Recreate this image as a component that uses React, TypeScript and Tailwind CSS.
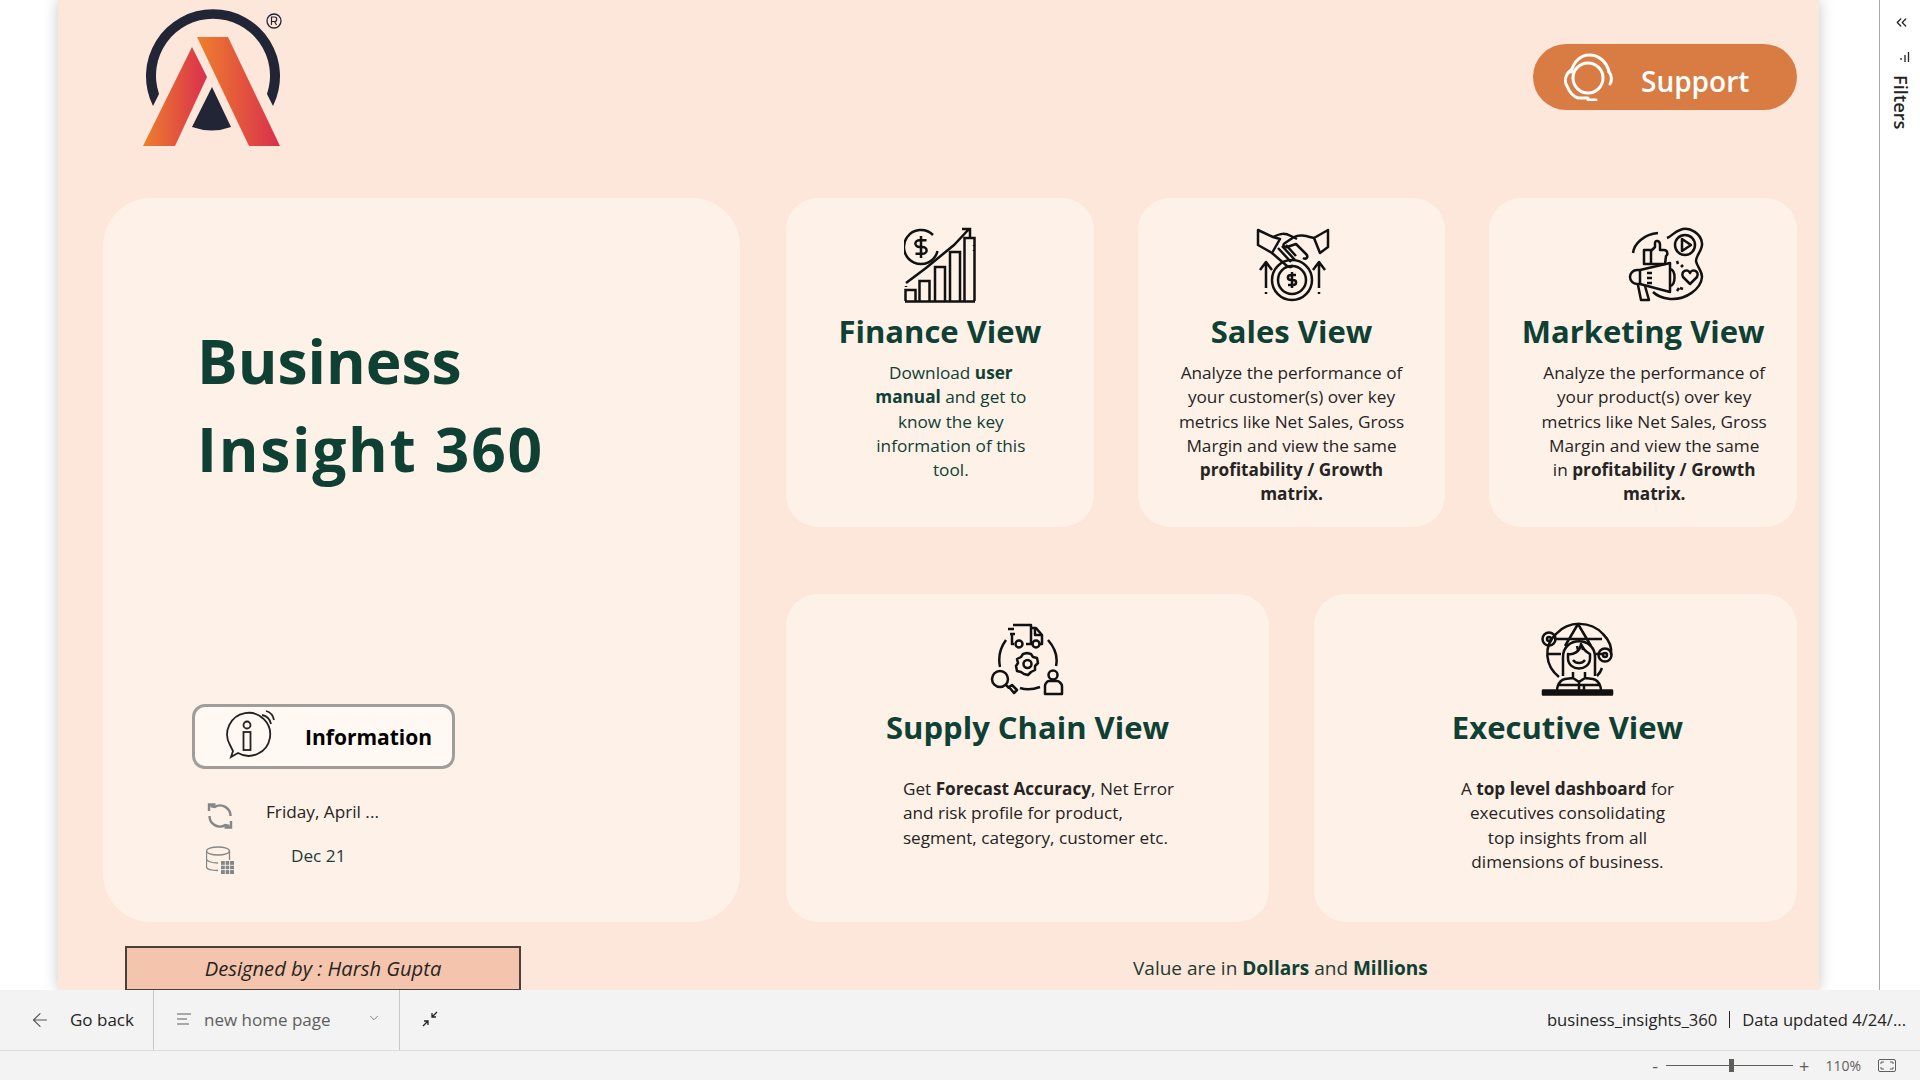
import { ReactNode } from "react";
import { ArrowLeft, ChevronDown, ChevronsLeft } from "lucide-react";

const dollar = (x: number, y: number, s: number) =>
  `M${x} ${y - s}v${2 * s}M${x + 0.5 * s} ${y - 0.62 * s}H${x - 0.13 * s}a${0.38 * s} ${0.31 * s} 0 0 0 0 ${0.62 * s}h${0.26 * s}a${0.38 * s} ${0.31 * s} 0 0 1 0 ${0.62 * s}H${x - 0.5 * s}`;

function FinanceIcon() {
  return (
    <svg width="72" height="76" viewBox="0 0 72 76" fill="none" stroke="#111" strokeWidth="2.500">
      <path d="M29 8A17 17 0 1 0 33.500 24" />
      <path d={dollar(17, 20, 11)} />
      <path d="M1 74.500h70M1.500 74V63h10v11M15.500 74V54h10v20M31 74V40h10v34M46 74V25h10v49M60.500 74V11h10v63" />
      <path d="M2 56 22 41 50 18 65 2M58 2h8v8" />
      <path d="M2 59v1M70 18v1M70 23v1" />
    </svg>
  );
}

function SalesIcon() {
  return (
    <svg width="100" height="90" viewBox="0 0 100 90" fill="none" stroke="#111" strokeWidth="2.500" strokeLinejoin="round">
      <path d="M16 10 31 17 38 19 30 33 16 25Z" />
      <path d="M86 10 72 18 78 33 86 27Z" />
      <path d="M31 17c8-4 12-4 18-1l6 3M72 18c-8-2-14-4-20-1l-9 6c-3 2-1 5 2 4l9-3 10 10c3 3 0 6-3 4" />
      <path d="M30 33 45 46c3 2 5 1 6-1M36 28l13 14M40 26l13 14M44 25l10 11" />
      <circle cx="50" cy="60" r="20" />
      <circle cx="50" cy="60" r="14" />
      <path d={dollar(50, 60, 8)} />
      <path d="M24 68V42M18 50l6-8 6 8M24 72v2M77 68V42M71 50l6-8 6 8M77 72v2" />
    </svg>
  );
}

function MarketingIcon() {
  return (
    <svg width="100" height="90" viewBox="0 0 100 90" fill="none" stroke="#111" strokeWidth="2.500" strokeLinejoin="round">
      <path d="M47 18C52 16 54 12 60 10C70 6 81 14 82 23C83 30 76 35 76 41C77 47 82 50 82 57C81 69 66 80 50 79C43 78 37 76 33 72" />
      <path d="M13 33C14 24 24 14 38 13" />
      <circle cx="65" cy="25" r="10" />
      <path d="M62 19v12l9-6Z" />
      <path d="M24 30h7v14h-7ZM31 31l4-4V23c0-3 5-3 5 2v5h4c4 0 4 5 2 6l-1 8H31" />
      <path d="M50 43 20 50H17a7 7 0 0 0 0 14h3l30 8Z" />
      <path d="M20 50v14M27 53h5M27 58h5M27 63h5" />
      <path d="M50 49c6 1 6 16 0 17M18 65l3 15h8l-4-14" />
      <path d="M57 41l1 3M63 45l-2 2M57 71l2-3M63 69l-3-1" />
      <path d="M70 64l-7-7c-3-6 5-9 7-4 2-5 10-2 7 4Z" />
    </svg>
  );
}

function SupplyIcon() {
  return (
    <svg width="100" height="90" viewBox="0 0 100 90" fill="none" stroke="#111" strokeWidth="2.500" strokeLinejoin="round">
      <path d="M33 11H51V30H46M34 30H32V20M51 14H56L62 21V30H60M51 30H52M28 15H34M30 20H35" />
      <circle cx="39" cy="30" r="3.500" />
      <circle cx="56" cy="30" r="3.500" />
      <path d="M55 15v6h7" />
      <path d="M26 26C20 34 18 43 20 53M68 26C75 34 78 43 76 52M40 74C46 76 52 76 60 73" />
      <path d="M47 39l4 1 2 3 4 1 1 5-3 3v4l-4 2-3 3-4-1-3-2-4-1-1-5 2-3-1-4 4-2 2-3Z" />
      <circle cx="47.500" cy="50" r="4" />
      <circle cx="20" cy="65" r="8" />
      <path d="M26 71l3 3M29 73l5 6 3-3-5-5Z" />
      <circle cx="73" cy="61" r="4.500" />
      <path d="M65 80V72c0-2 2-5 4-5h8c2 0 5 3 5 5v8Z" />
    </svg>
  );
}

function ExecutiveIcon() {
  return (
    <svg width="100" height="90" viewBox="0 0 100 90" fill="none" stroke="#111" strokeWidth="2.500" strokeLinejoin="round">
      <path d="M29 63C15 52 13 32 26 20C39 6 61 7 73 20C79 26 82 34 81 41M72 54C71 57 69 60 67 62" />
      <path d="M24 25H72M17 40H31M66 40H74M48 10L35 32M48 10L61 32" />
      <circle cx="19" cy="25" r="6.500" />
      <circle cx="19" cy="25" r="2" />
      <circle cx="75" cy="41" r="6.500" />
      <circle cx="75" cy="41" r="2" />
      <path d="M33 62V43C33 22 65 22 65 43V62" />
      <path d="M38 40c5 1 12-2 13-10 2 5 5 8 9 10v4c0 14-22 14-22 0Z" />
      <path d="M52 32l1 4M47 32l1 4M43 46c3 4 9 4 12 0" />
      <path d="M43 58v6l-8 1c-8 2-9 12-7 15M55 58v6l8 1c8 2 9 12 7 15M43 64l6 4 6-4M49 68v12M44 71h10v9M28 71H44M54 71H70" />
      <path d="M13 76.500H82V80.500H13Z" fill="#111" />
    </svg>
  );
}

function Logo() {
  return (
    <svg width="170" height="155" viewBox="130 0 170 155" fill="none">
      <defs>
        <linearGradient id="legL" x1="143" y1="0" x2="207" y2="0" gradientUnits="userSpaceOnUse">
          <stop offset="0" stopColor="#ee7f2c" />
          <stop offset="1" stopColor="#d92f4d" />
        </linearGradient>
        <linearGradient id="legR" x1="197" y1="0" x2="280" y2="0" gradientUnits="userSpaceOnUse">
          <stop offset="0" stopColor="#ee7f2c" />
          <stop offset="1" stopColor="#d92f4d" />
        </linearGradient>
      </defs>
      <path d="M153 106A67 67 0 1 1 273 106L267 94A57 57 0 1 0 159 94Z" fill="#222536" />
      <path d="M192 47 207 77 175 146H143Z" fill="url(#legL)" />
      <path d="M197 37H228L280 146H249Z" fill="url(#legR)" />
      <path d="M212 87 231 127Q212 134 192 127Z" fill="#222536" />
      <circle cx="274" cy="21" r="7" stroke="#222536" strokeWidth="1.300" />
      <path d="M271.500 25V17h3a2 2 0 0 1 0 4.500h-3M274.500 21.500l2 3.500" stroke="#222536" strokeWidth="1.200" />
    </svg>
  );
}

function HeadsetIcon() {
  return (
    <svg width="50" height="48" viewBox="0 0 50 48" fill="none" stroke="#fff" strokeWidth="3" strokeLinecap="round">
      <circle cx="24" cy="25" r="15" />
      <path d="M7 19C10 8 17 2 25 2C35 2 43 9 45 19" />
      <path d="M7 17C1 22 0 28 3 33C5 38 8 43 14 45H24M24 47h8" />
      <path d="M45 19c3 3 3 9 1 12" />
    </svg>
  );
}

function InfoIcon() {
  return (
    <svg width="54" height="54" viewBox="0 0 54 54" fill="none" stroke="#222" strokeWidth="1.800">
      <path d="M7 47l7-4A21.500 21.500 0 1 0 6 35L9 41Z" />
      <circle cx="23" cy="15" r="3.500" />
      <rect x="19.500" y="22" width="7" height="18" />
      <path d="M38 5c5 1 8 4 9 9M42 1c4 1 7 4 8 9" />
    </svg>
  );
}

function RefreshIcon() {
  return (
    <svg width="28" height="28" viewBox="0 0 28 28" fill="none" stroke="#858585" strokeWidth="2.400">
      <path d="M3 9V2.500H9.500" />
      <path d="M4.500 4 8.750 4.900A10.500 10.500 0 0 1 24.500 14" />
      <path d="M25 19v6.500H18.500" />
      <path d="M23.500 24 19.250 23.100A10.500 10.500 0 0 1 3.500 14" />
    </svg>
  );
}

function DatabaseIcon() {
  return (
    <svg width="28" height="28" viewBox="0 0 28 28" fill="none" stroke="#858585" strokeWidth="1.300">
      <ellipse cx="12" cy="5" rx="11.500" ry="4" />
      <path d="M.500 5v16c0 2 5 3.500 11.500 3.500M23.500 5v9M.500 13c0 2 5 4 11.500 4" />
      <rect x="15" y="15" width="13" height="13" fill="#858585" stroke="none" />
      <path d="M15 19.300h13M15 23.600h13M19.300 15v13M23.600 15v13" stroke="#fff" strokeWidth="0.800" />
    </svg>
  );
}

interface ViewCardProps {
  title: string;
  icon: ReactNode;
  iconClass?: string;
  titleClass?: string;
  bodyClass: string;
  children: ReactNode;
}

function ViewCard({ title, icon, iconClass = "h-[90px]", titleClass = "", bodyClass, children }: ViewCardProps) {
  return (
    <div className="flex-1 rounded-[32px] bg-[#fef1e8] flex flex-col items-center pt-[22px]">
      <div className={`flex items-center justify-center ${iconClass}`}>{icon}</div>
      <h2 className={`mt-[1px] text-[31px] leading-[40px] font-bold text-[#0e4033] ${titleClass}`}>{title}</h2>
      <p className={`text-[17.200px] leading-[24.300px] ${bodyClass}`}>{children}</p>
    </div>
  );
}

export default function App() {
  return (
    <div className="h-screen w-[1920px] overflow-hidden flex flex-col bg-white font-['Open_Sans',sans-serif] text-[#252423]">
      <div className="flex h-[990px]">
        {/* Report canvas */}
        <div className="ml-[58px] w-[1761px] h-[990px] bg-[#fde6da] shadow-[0_0_14px_rgba(0,0,0,0.22)] overflow-hidden">
          <header className="h-[198px] pl-[72px] pr-[22px] flex justify-between">
            <Logo />
            <button className="mt-[44px] w-[264px] h-[66px] rounded-full bg-[#d87c43] flex items-center pl-[31px] text-white">
              <HeadsetIcon />
              <span className="ml-[27px] mt-[8px] text-[28px] font-semibold">Support</span>
            </button>
          </header>

          <div className="flex h-[724px] pl-[45px] pr-[22px] gap-[46px]">
            <div className="w-[637px] rounded-[48px] bg-[#fef1e8] flex flex-col pt-[119px] pb-[48px] pl-[89px]">
              <h1 className="pl-[5px] text-[60.500px] leading-[88px] font-bold text-[#0e4033]">
                Business
                <br />
                <span className="tracking-[1.700px]">Insight 360</span>
              </h1>
              <div className="mt-auto">
                <div className="w-[263px] h-[65px] rounded-[13px] border-[3px] border-[#a09e9a] bg-[#fff8f3] flex items-center pl-[29px]">
                  <InfoIcon />
                  <span className="ml-[27px] mt-[2px] text-[21px] font-bold text-black">Information</span>
                </div>
                <div className="mt-[33px] flex items-center h-[28px] pl-[14px]">
                  <RefreshIcon />
                  <span className="ml-[32px] mb-[9px] text-[17.200px]">Friday, April ...</span>
                </div>
                <div className="mt-[16px] flex items-center h-[28px] pl-[14px]">
                  <DatabaseIcon />
                  <span className="ml-[57px] mb-[9px] text-[17.200px] text-[#1d3c3a]">Dec 21</span>
                </div>
              </div>
            </div>

            <div className="flex-1 flex flex-col gap-[67px]">
              <div className="flex h-[329px] gap-[44px]">
                <ViewCard
                  title="Finance View"
                  icon={<FinanceIcon />}
                  bodyClass="mt-[10px] pl-[22px] text-center text-[#0e4033]"
                >
                  Download <b>user</b>
                  <br />
                  <b>manual</b> and get to
                  <br />
                  know the key
                  <br />
                  information of this
                  <br />
                  tool.
                </ViewCard>
                <ViewCard title="Sales View" icon={<SalesIcon />} bodyClass="mt-[10px] text-center">
                  Analyze the performance of
                  <br />
                  your customer(s) over key
                  <br />
                  metrics like Net Sales, Gross
                  <br />
                  Margin and view the same
                  <br />
                  <b>profitability / Growth</b>
                  <br />
                  <b>matrix.</b>
                </ViewCard>
                <ViewCard
                  title="Marketing View"
                  icon={<MarketingIcon />}
                  iconClass="h-[90px] ml-[54px]"
                  bodyClass="mt-[10px] pl-[22px] text-center"
                >
                  Analyze the performance of
                  <br />
                  your product(s) over key
                  <br />
                  metrics like Net Sales, Gross
                  <br />
                  Margin and view the same
                  <br />
                  in <b>profitability / Growth</b>
                  <br />
                  <b>matrix.</b>
                </ViewCard>
              </div>

              <div className="flex h-[328px] gap-[45px]">
                <ViewCard
                  title="Supply Chain View"
                  icon={<SupplyIcon />}
                  iconClass="h-[90px] ml-[5px] -mt-[2px] mb-[2px]"
                  bodyClass="mt-[30px] pl-[22px] text-left"
                >
                  Get <b>Forecast Accuracy</b>, Net Error
                  <br />
                  and risk profile for product,
                  <br />
                  segment, category, customer etc.
                </ViewCard>
                <ViewCard
                  title="Executive View"
                  icon={<ExecutiveIcon />}
                  iconClass="h-[90px] ml-[48px] -mt-[2px] mb-[2px]"
                  titleClass="ml-[24px]"
                  bodyClass="mt-[30px] ml-[24px] text-center"
                >
                  A <b>top level dashboard</b> for
                  <br />
                  executives consolidating
                  <br />
                  top insights from all
                  <br />
                  dimensions of business.
                </ViewCard>
              </div>
            </div>
          </div>

          <footer className="mt-[24px] pl-[67px] flex">
            <div className="w-[396px] h-[45px] bg-[#f5c4ac] border-2 border-[#4a3f3a] flex items-center justify-center text-[20.200px] italic">
              Designed by : Harsh Gupta
            </div>
            <p className="ml-[612px] mt-[4px] text-[19px] leading-[36px] text-[#1f3a33]">
              Value are in <b className="text-[#0e4033]">Dollars</b> and <b className="text-[#0e4033]">Millions</b>
            </p>
          </footer>
        </div>

        {/* Filter pane */}
        <div className="ml-[60px] w-[41px] border-l border-[#a8a8a8] flex flex-col items-center pt-[14px]">
          <ChevronsLeft size={17} strokeWidth={1.800} className="text-[#252423] ml-[2px]" />
          <svg width="12" height="12" viewBox="0 0 12 12" fill="none" stroke="#252423" strokeWidth="1.300" className="mt-[20px] ml-[7px]">
            <path d="M10.500 1v10M7 4v7M3 7v2" />
          </svg>
          <span className="mt-[12px] ml-[2px] [writing-mode:vertical-rl] text-[18.300px] font-semibold leading-none">Filters</span>
        </div>
      </div>

      {/* Page navigation bar */}
      <nav className="h-[61px] bg-[#f3f3f3] border-b border-[#dcdcdc] flex items-center text-[17px]">
        <div className="w-[154px] h-full border-r border-[#c8c8c8] flex items-center pl-[29px]">
          <ArrowLeft size={22} strokeWidth={1.300} className="text-[#555]" />
          <span className="ml-[19px]">Go back</span>
        </div>
        <div className="w-[246px] h-full border-r border-[#c8c8c8] flex items-center pl-[22px] text-[#605e5c]">
          <svg width="16" height="14" viewBox="0 0 16 14" fill="none" stroke="#605e5c" strokeWidth="1.100" className="-mt-[2px]">
            <path d="M1 2h14M1 7h10M1 12h12" />
          </svg>
          <span className="ml-[12px]">new home page</span>
          <ChevronDown size={14} strokeWidth={1.300} className="ml-[36px] -mt-[4px]" />
        </div>
        <svg width="16" height="16" viewBox="0 0 16 16" fill="none" stroke="#252423" strokeWidth="1.300" className="ml-[22px] -mt-[2px]">
          <path d="M15 1 10 6M10 2v4h4M1 15l5-5M2 10h4v4" />
        </svg>
        <div className="ml-auto pr-[14px] flex items-center text-[16.600px]">
          <span>business_insights_360</span>
          <span className="mx-[12px] w-px h-[17px] bg-[#252423]" />
          <span>Data updated 4/24/...</span>
        </div>
      </nav>

      {/* Status bar */}
      <div className="flex-1 bg-[#f3f3f3] flex items-center justify-end text-[#605e5c]">
        <span className="text-[18px] leading-none mr-[8px]">-</span>
        <div className="relative w-[127px] h-px bg-[#605e5c]">
          <div className="absolute left-[63px] -top-[6px] w-[5px] h-[13px] bg-[#605e5c]" />
        </div>
        <span className="ml-[6px] text-[18px] leading-none">+</span>
        <span className="ml-[16px] text-[14px]">110%</span>
        <svg width="18" height="13" viewBox="0 0 18 13" fill="none" stroke="#605e5c" strokeWidth="1" className="ml-[17px] mr-[24px]">
          <rect x="0.500" y="0.500" width="17" height="12" rx="1.500" />
          <path d="M3 5V3h3M15 5V3h-3M3 8v2h3M15 8v2h-3" />
        </svg>
      </div>
    </div>
  );
}
